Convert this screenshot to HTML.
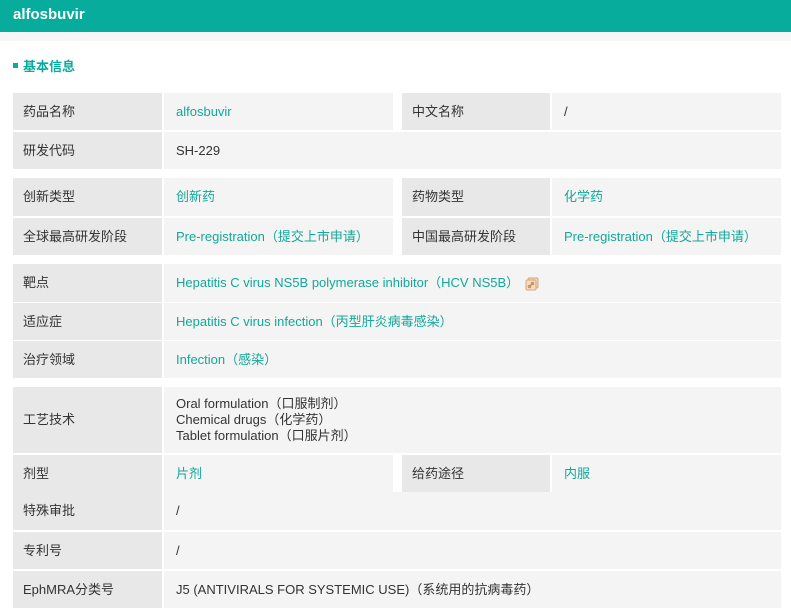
<!DOCTYPE html>
<html><head><meta charset="utf-8"><style>
*{margin:0;padding:0;box-sizing:border-box}
body{width:791px;height:610px;overflow:hidden;background:#fff;font-family:"Liberation Sans","Noto Sans CJK SC",sans-serif;font-size:13px;color:#333;position:relative}
.hd{position:absolute;left:0;top:0;width:791px;height:32px;background:#08ac9c;color:#fff;font-weight:bold;font-size:15px;line-height:30px;padding-left:13px}
.strip{position:absolute;left:0;top:32px;width:791px;height:9px;background:#f6f6f6}
.sec{position:absolute;left:13px;top:59px;color:#08ac9c;font-weight:bold;font-size:13px;line-height:16px}
.sec i{display:inline-block;width:5px;height:5px;background:#08ac9c;vertical-align:middle;margin-right:5px;position:relative;top:-2px}
.b{position:absolute;display:flex;align-items:center;padding-left:10px;line-height:16px}
.l{background:#e8e8e8}
.v{background:#f4f4f4;padding-left:12px}
.t{color:#13a898}
</style></head><body>
<div class="hd">alfosbuvir</div>
<div class="strip"></div>
<div class="sec"><i></i>基本信息</div>

<div class="b l" style="left:13px;top:93px;width:149px;height:37px">药品名称</div>
<div class="b v t" style="left:164px;top:93px;width:229px;height:37px">alfosbuvir</div>
<div class="b l" style="left:402px;top:93px;width:148px;height:37px">中文名称</div>
<div class="b v" style="left:552px;top:93px;width:229px;height:37px">/</div>
<div class="b l" style="left:13px;top:132px;width:149px;height:37px">研发代码</div>
<div class="b v" style="left:164px;top:132px;width:617px;height:37px">SH-229</div>

<div class="b l" style="left:13px;top:178px;width:149px;height:38px">创新类型</div>
<div class="b v t" style="left:164px;top:178px;width:229px;height:38px">创新药</div>
<div class="b l" style="left:402px;top:178px;width:148px;height:38px">药物类型</div>
<div class="b v t" style="left:552px;top:178px;width:229px;height:38px">化学药</div>
<div class="b l" style="left:13px;top:218px;width:149px;height:37px">全球最高研发阶段</div>
<div class="b v t" style="left:164px;top:218px;width:229px;height:37px">Pre-registration（提交上市申请）</div>
<div class="b l" style="left:402px;top:218px;width:148px;height:37px">中国最高研发阶段</div>
<div class="b v t" style="left:552px;top:218px;width:229px;height:37px">Pre-registration（提交上市申请）</div>

<div class="b l" style="left:13px;top:264px;width:149px;height:38px">靶点</div>
<div class="b v t" style="left:164px;top:264px;width:617px;height:38px">Hepatitis C virus NS5B polymerase inhibitor（HCV NS5B）<svg width="14" height="14" viewBox="0 0 14 14" style="margin-left:6px;margin-top:2px"><rect x="3" y="1" width="10" height="10" rx="1.5" fill="#f0d8b8" stroke="#d8a878"/><rect x="1" y="3" width="10" height="10" rx="1.5" fill="#f4dcc0" stroke="#d8a878"/><path d="M4 10 L8 6" stroke="#c89060" stroke-width="1.2"/><circle cx="4.5" cy="9.5" r="1.3" fill="none" stroke="#c89060"/><circle cx="7.5" cy="6.5" r="1.3" fill="none" stroke="#c89060"/></svg></div>
<div class="b l" style="left:13px;top:303px;width:149px;height:37px">适应症</div>
<div class="b v t" style="left:164px;top:303px;width:617px;height:37px">Hepatitis C virus infection（丙型肝炎病毒感染）</div>
<div class="b l" style="left:13px;top:341px;width:149px;height:37px">治疗领域</div>
<div class="b v t" style="left:164px;top:341px;width:617px;height:37px">Infection（感染）</div>

<div class="b l" style="left:13px;top:387px;width:149px;height:66px">工艺技术</div>
<div class="b v" style="left:164px;top:387px;width:617px;height:66px">Oral formulation（口服制剂）<br>Chemical drugs（化学药）<br>Tablet formulation（口服片剂）</div>
<div class="b l" style="left:13px;top:455px;width:149px;height:75px"></div>
<div class="b v" style="left:164px;top:455px;width:617px;height:75px"></div>
<div class="b" style="left:13px;top:455px;width:149px;height:37px">剂型</div>
<div class="b t" style="left:164px;top:455px;width:229px;height:37px;padding-left:12px">片剂</div>
<div style="position:absolute;left:393px;top:455px;width:9px;height:37px;background:#fff"></div>
<div class="b l" style="left:402px;top:455px;width:148px;height:37px">给药途径</div>
<div style="position:absolute;left:550px;top:455px;width:2px;height:37px;background:#fff"></div>
<div class="b t" style="left:552px;top:455px;width:229px;height:37px;padding-left:12px">内服</div>
<div class="b" style="left:13px;top:492px;width:149px;height:38px">特殊审批</div>
<div class="b" style="left:164px;top:492px;width:617px;height:38px;padding-left:12px">/</div>
<div class="b l" style="left:13px;top:532px;width:149px;height:37px">专利号</div>
<div class="b v" style="left:164px;top:532px;width:617px;height:37px">/</div>
<div class="b l" style="left:13px;top:571px;width:149px;height:37px">EphMRA分类号</div>
<div class="b v" style="left:164px;top:571px;width:617px;height:37px">J5 (ANTIVIRALS FOR SYSTEMIC USE)（系统用的抗病毒药）</div>
</body></html>
